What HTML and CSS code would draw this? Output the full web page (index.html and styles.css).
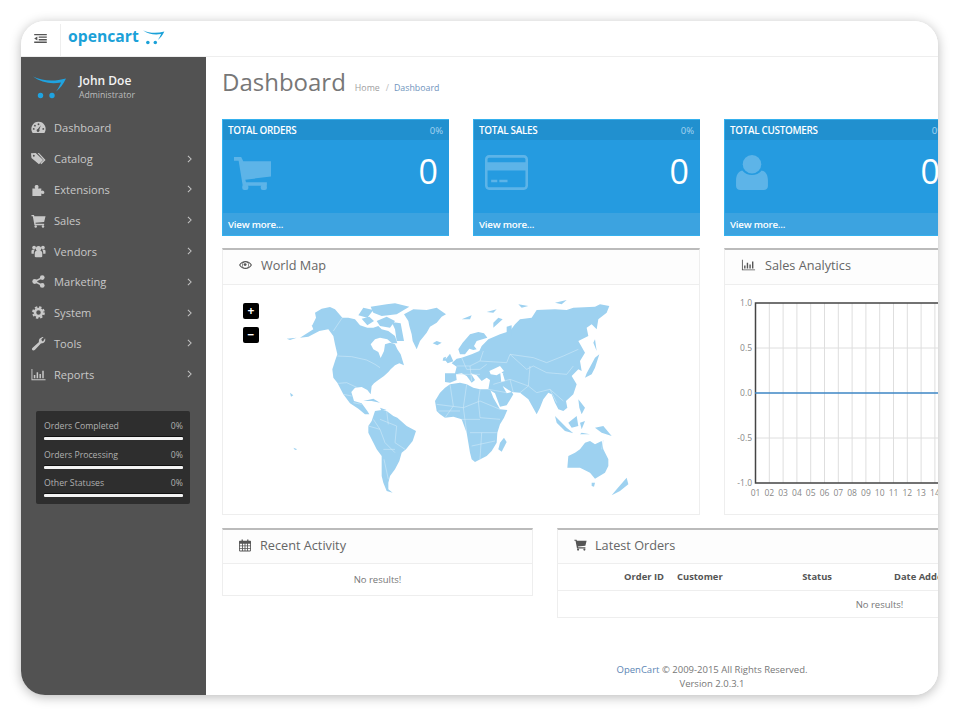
FILE: index.html
```html
<!DOCTYPE html>
<html lang="en">
<head>
<meta charset="utf-8">
<title>OpenCart Dashboard</title>
<link rel="stylesheet" href="styles.css">
</head>
<body>
<svg class="defs" width="0" height="0" aria-hidden="true">
  <symbol id="i-dash" viewBox="0 0 16 16"><path fill-rule="evenodd" d="M8 2a7.5 7.5 0 0 1 6.6 11.2l-.4.6H1.800l-.4-.6A7.500 7.500 0 0 1 8 2zM8 3.500a1 1 0 1 0 0 2 1 1 0 0 0 0-2zM4.200 5a1 1 0 1 0 0 2 1 1 0 0 0 0-2zM2.900 8.500a1 1 0 1 0 0 2 1 1 0 0 0 0-2zM13.100 8.500a1 1 0 1 0 0 2 1 1 0 0 0 0-2zM10.500 5.500 7.300 9.700a1.500 1.500 0 1 0 1.500.6z"/></symbol>
  <symbol id="i-tags" viewBox="0 0 16 16"><path fill-rule="evenodd" d="M0 2.500 5 2l8 7.500L8.500 14 .5 7.500zM3 4a1 1 0 1 0 0 2 1 1 0 0 0 0-2z"/><path d="M7 2h1.500l7 7.500-4.500 4.500-1-1 3.500-3.500z"/></symbol>
  <symbol id="i-puzzle" viewBox="0 0 16 16"><path d="M1.500 7h3C4.200 6.200 3.800 5.500 4 4.500 4.400 2.800 7.600 2.800 8 4.500c.2 1-.2 1.700-.5 2.500H11v2.700c.7-.4 1.300-.7 2-.5 1.700.4 1.700 3.200 0 3.600-.7.200-1.300-.1-2-.5V15H1.500z"/></symbol>
  <symbol id="i-cart" viewBox="0 0 16 16"><path d="M.5 2h2.700l.4 1.500h11.900L14 9.500l-9.200 1 .2 1h9V13H3.700L1.900 3.500H.5z"/><circle cx="5" cy="14.300" r="1.300"/><circle cx="12.800" cy="14.300" r="1.300"/></symbol>
  <symbol id="i-users" viewBox="0 0 16 16"><circle cx="8" cy="5" r="2.800"/><circle cx="3.300" cy="3.800" r="2"/><circle cx="12.700" cy="3.800" r="2"/><path d="M4 9.500c0-1.500 1-2 2-2h4c1 0 2 .5 2 2V13c0 .5-.5 1-1 1H5c-.5 0-1-.5-1-1z"/><path d="M.5 7.500c0-1 .8-1.500 1.500-1.500h1.800c-.3 1-.8 1.500-.8 3v1.500H1.200c-.4 0-.7-.3-.7-.7zM15.500 7.500c0-1-.8-1.500-1.500-1.500h-1.800c.3 1 .8 1.500.8 3v1.500h1.800c.4 0 .7-.3.7-.7z"/></symbol>
  <symbol id="i-share" viewBox="0 0 16 16"><circle cx="4" cy="8" r="2.600"/><circle cx="12" cy="3.800" r="2.500"/><circle cx="12" cy="12.200" r="2.500"/><path d="M4 8 12 3.800M4 8 12 12.200" stroke="currentColor" stroke-width="1.600"/></symbol>
  <symbol id="i-cog" viewBox="0 0 16 16"><circle cx="8" cy="8" r="3.800" fill="none" stroke="currentColor" stroke-width="2.800"/><circle cx="8" cy="8" r="5.800" fill="none" stroke="currentColor" stroke-width="2" stroke-dasharray="2.550 2"/></symbol>
  <symbol id="i-wrench" viewBox="0 0 16 16"><path d="M15 2.500c.8 2.500-.5 5.500-4.500 5.500L4 15c-1 .8-2.500.5-2.800-.3-.4-.8-.2-1.700.5-2.300L8.500 6.500C7.800 3.500 10 1 13.500 1L11 3.500 11.800 5.500 13 5.500z"/></symbol>
  <symbol id="i-bars" viewBox="0 0 16 16"><path d="M.5 2H1.500V13H15.500V14H.5zM3 8.500h1.600V12H3zM6 5.500h1.600V12H6zM9 7.500h1.600V12H9zM12 4h1.600v8H12z"/></symbol>
  <symbol id="i-eye" viewBox="0 0 16 12"><path fill-rule="evenodd" d="M0 6C2 2.500 5 1 8 1s6 1.500 8 5c-2 3.500-5 5-8 5S2 9.500 0 6zM8 2.500a3.500 3.500 0 1 0 0 7 3.500 3.500 0 0 0 0-7zM1.500 6c1 1.400 2.200 2.400 3.500 3A4.500 4.500 0 0 1 5 3C3.700 3.600 2.500 4.600 1.500 6zm9.500-3a4.500 4.500 0 0 1 0 6c1.300-.6 2.500-1.600 3.500-3-1-1.400-2.200-2.400-3.500-3z"/><circle cx="7.500" cy="5.500" r="1.800"/></symbol>
  <symbol id="i-cal" viewBox="0 0 14 16"><path fill-rule="evenodd" d="M1 3h2V1.500h1.500V3h5V1.500H11V3h2c.5 0 1 .5 1 1v10.500c0 .5-.5 1-1 1H1c-.5 0-1-.5-1-1V4c0-.5.5-1 1-1zM1 6.500V8.500h2.500V6.500zM4.500 6.500V8.500h2V6.500zM7.500 6.500V8.500h2V6.500zM10.500 6.500V8.500H13V6.500zM1 9.500v2h2.500v-2zM4.500 9.500v2h2v-2zM7.500 9.500v2h2v-2zM10.500 9.500v2H13v-2zM1 12.500v2h2.500v-2zM4.500 12.500v2h2v-2zM7.500 12.500v2h2v-2zM10.500 12.500v2H13v-2z"/></symbol>
  <symbol id="i-swoosh" viewBox="0 0 34 24"><path d="M0 0C10 5 22 5 33 2 30 8 27 12 23 15 26 11 27 8 28 6 18 8 8 6 0 0z"/><circle cx="7.500" cy="19" r="2.700"/><circle cx="19" cy="19" r="2.700"/></symbol>
</svg>

<div class="screen">
  <header class="topbar">
    <div class="menu-btn">
      <svg class="menu-icon" viewBox="0 0 14 10"><path d="M0 0h14v1.500H0zM5 2.800h9v1.500H5zM5 5.600h9v1.500H5zM0 8.400h14v1.500H0zM3.500 2.800v4.300L0 5z"/></svg>
    </div>
    <div class="brand">
      <span class="brand-name">opencart</span>
      <svg class="brand-cart"><use href="#i-swoosh"/></svg>
    </div>
  </header>

  <div class="layout">
    <aside class="sidebar">
      <div class="profile">
        <svg class="profile-logo"><use href="#i-swoosh"/></svg>
        <div class="profile-text">
          <div class="profile-name">John Doe</div>
          <div class="profile-role">Administrator</div>
        </div>
      </div>
      <nav class="nav">
        <a class="nav-item"><svg class="nav-icon"><use href="#i-dash"/></svg><span class="nav-label">Dashboard</span></a>
        <a class="nav-item"><svg class="nav-icon"><use href="#i-tags"/></svg><span class="nav-label">Catalog</span><svg class="chev" viewBox="0 0 6 10"><path d="M1 1l4 4-4 4"/></svg></a>
        <a class="nav-item"><svg class="nav-icon"><use href="#i-puzzle"/></svg><span class="nav-label">Extensions</span><svg class="chev" viewBox="0 0 6 10"><path d="M1 1l4 4-4 4"/></svg></a>
        <a class="nav-item"><svg class="nav-icon"><use href="#i-cart"/></svg><span class="nav-label">Sales</span><svg class="chev" viewBox="0 0 6 10"><path d="M1 1l4 4-4 4"/></svg></a>
        <a class="nav-item"><svg class="nav-icon"><use href="#i-users"/></svg><span class="nav-label">Vendors</span><svg class="chev" viewBox="0 0 6 10"><path d="M1 1l4 4-4 4"/></svg></a>
        <a class="nav-item"><svg class="nav-icon"><use href="#i-share"/></svg><span class="nav-label">Marketing</span><svg class="chev" viewBox="0 0 6 10"><path d="M1 1l4 4-4 4"/></svg></a>
        <a class="nav-item"><svg class="nav-icon"><use href="#i-cog"/></svg><span class="nav-label">System</span><svg class="chev" viewBox="0 0 6 10"><path d="M1 1l4 4-4 4"/></svg></a>
        <a class="nav-item"><svg class="nav-icon"><use href="#i-wrench"/></svg><span class="nav-label">Tools</span><svg class="chev" viewBox="0 0 6 10"><path d="M1 1l4 4-4 4"/></svg></a>
        <a class="nav-item"><svg class="nav-icon"><use href="#i-bars"/></svg><span class="nav-label">Reports</span><svg class="chev" viewBox="0 0 6 10"><path d="M1 1l4 4-4 4"/></svg></a>
      </nav>
      <div class="stats">
        <div class="stat"><div class="stat-row"><span>Orders Completed</span><span>0%</span></div><div class="stat-bar"></div></div>
        <div class="stat"><div class="stat-row"><span>Orders Processing</span><span>0%</span></div><div class="stat-bar"></div></div>
        <div class="stat"><div class="stat-row"><span>Other Statuses</span><span>0%</span></div><div class="stat-bar"></div></div>
      </div>
    </aside>

    <main class="main">
      <div class="main-inner">
        <div class="page-head">
          <h1 class="page-title">Dashboard</h1>
          <div class="crumbs"><span class="crumb">Home</span><span class="crumb-sep">/</span><span class="crumb crumb-active">Dashboard</span></div>
        </div>

        <div class="tiles">
          <div class="tile">
            <div class="tile-head"><span>TOTAL ORDERS</span><span class="tile-pct">0%</span></div>
            <div class="tile-body">
              <svg class="tile-icon tile-icon-cart" viewBox="0 0 36 32"><path d="M0 0h7l2 4h27v15l-25 3 .7 2.500H32V28H8.500L4.500 3.500H0z"/><rect x="8" y="27" width="6" height="5" rx="2"/><rect x="26" y="27" width="6" height="5" rx="2"/></svg>
              <span class="tile-num">0</span>
            </div>
            <div class="tile-foot">View more...</div>
          </div>
          <div class="tile">
            <div class="tile-head"><span>TOTAL SALES</span><span class="tile-pct">0%</span></div>
            <div class="tile-body">
              <svg class="tile-icon tile-icon-card" viewBox="0 0 42 34"><path fill-rule="evenodd" d="M4 0h34c2.200 0 4 1.800 4 4v26c0 2.200-1.800 4-4 4H4c-2.200 0-4-1.800-4-4V4c0-2.200 1.800-4 4-4zM2.500 4v3h37V4c0-.8-.7-1.500-1.500-1.500H4C3.200 2.500 2.500 3.200 2.500 4zM2.500 15v15c0 .8.700 1.500 1.500 1.500h34c.8 0 1.500-.7 1.500-1.500V15zM6 24h6v2.500H6zM14 24h8v2.500h-8z"/></svg>
              <span class="tile-num">0</span>
            </div>
            <div class="tile-foot">View more...</div>
          </div>
          <div class="tile">
            <div class="tile-head"><span>TOTAL CUSTOMERS</span><span class="tile-pct">0%</span></div>
            <div class="tile-body">
              <svg class="tile-icon tile-icon-user" viewBox="0 0 31 34"><circle cx="15.500" cy="9" r="9"/><path d="M6 15c2.500 3 6 4.500 9.500 4.500S22.500 18 25 15c4 1 6 4.500 6 10v5c0 2.500-2 4-4 4H4c-2 0-4-1.500-4-4v-5c0-5.500 2-9 6-10z"/></svg>
              <span class="tile-num">0</span>
            </div>
            <div class="tile-foot">View more...</div>
          </div>
        </div>

        <div class="row-charts">
          <section class="panel">
            <h2 class="panel-head"><svg class="head-icon head-eye"><use href="#i-eye"/></svg>World Map</h2>
            <div class="map-body">
              <div class="zoom-btns"><span class="zoom-btn">+</span><span class="zoom-btn">&minus;</span></div>
              <svg class="world" viewBox="0 0 1080 660">
                <g class="land">
                  <path d="M97 118 108 95 105 80 125 68 150 63 165 70 187 95 205 95 225 100 240 118 262 125 280 125 295 120 305 130 325 135 345 150 352 172 336 172 322 160 300 155 285 160 272 175 280 190 295 198 302 216 312 195 315 175 330 170 345 175 352 190 362 205 372 238 358 232 345 238 332 250 325 258 312 270 295 282 282 292 275 300 272 325 262 312 245 303 225 305 214 318 222 345 245 352 262 375 268 385 255 385 235 368 210 352 190 325 172 290 160 275 157 250 165 225 172 205 165 175 160 150 145 130 118 135 85 152 60 155 100 130 95 118z"/>
                  <path d="M235 88 250 65 280 72 262 95zM245 98 268 92 282 105 262 118zM272 62 320 55 345 52 388 62 350 85 305 90 280 80zM290 105 320 92 345 105 330 125 300 120zM335 108 362 112 372 165 350 165 345 130z"/>
                  <path d="M372 85 400 70 440 72 470 65 498 85 485 92 470 110 450 122 440 140 420 165 410 190 398 165 395 145 388 120 385 105z"/>
                  <path d="M458 172 470 165 485 170 472 178z"/>
                  <path d="M250 345 280 338 300 350 275 345zM300 365 320 372 305 375z"/>
                  <path d="M285 375 305 372 320 375 340 390 352 395 380 420 408 435 398 465 378 490 365 500 358 525 345 550 330 570 325 590 325 610 338 620 320 615 310 590 305 570 305 510 290 490 265 440 265 420 275 405z"/>
                  <path d="M480 320 495 305 510 295 540 290 560 295 580 305 600 310 630 310 640 335 660 370 682 372 672 395 660 415 652 440 650 470 635 495 620 510 585 528 575 520 570 500 565 470 560 440 545 400 520 392 495 395 480 385 470 375 465 345z"/>
                  <path d="M672 455 680 468 665 497 655 490 660 470z"/>
                  <path d="M495 262 495 288 510 290 530 282 528 265 545 262 560 270 575 290 585 282 572 262 590 268 605 285 620 275 630 282 625 310 645 322 660 362 680 358 700 325 695 318 720 320 745 340 770 385 780 365 790 340 805 320 815 325 825 350 835 370 850 375 862 365 858 345 880 325 890 295 875 270 895 250 905 255 900 225 915 200 895 165 925 150 920 125 935 115 950 130 955 100 980 80 988 60 960 55 945 62 880 65 860 72 825 70 770 72 755 95 720 100 705 115 690 135 660 145 625 160 605 180 598 195 575 205 545 215 530 218 515 232 530 242 525 262z"/>
                  <path d="M535 190 548 170 570 145 595 138 612 142 622 155 590 165 582 180 590 190 580 192 568 188 555 205 540 205z"/>
                  <path d="M495 222 510 203 520 226 503 232zM490 215 498 212 496 224 488 224z"/>
                  <path d="M545 100 575 88 570 100zM620 78 650 70 640 80zM715 55 745 60 725 65zM825 50 860 42 845 55zM655 95 668 100 640 125 640 110zM680 122 695 118 695 150 680 148z"/>
                  <path d="M945 215 958 205 945 245 935 265 915 275 920 262zM945 160 950 195 940 170z"/>
                  <path d="M895 340 915 365 905 385 898 365zM825 390 860 425 880 442 855 435 830 410z"/>
                  <path d="M865 410 890 390 895 420 875 425zM900 410 915 405 905 430zM945 425 970 420 995 450 965 440zM905 440 930 445 900 445z"/>
                  <path d="M862 545 865 510 885 500 900 490 915 470 930 465 945 475 965 465 970 490 985 520 985 540 975 560 945 578 930 560 900 545z"/>
                  <path d="M1040 575 1045 595 1020 615 995 628 1010 610zM935 590 945 590 942 602 935 600z"/>
                  <path d="M30 320 40 328 33 332zM40 485 52 490 45 492zM20 158 50 155 30 162z"/>
                </g>
                <g class="seas">
                  <path d="M628 255 660 240 672 255 650 268 632 265z"/>
                  <path d="M660 255 668 262 675 285 664 288z"/>
                  <path d="M668 300 695 318 680 322z"/>
                </g>
                <g class="borders">
                  <path d="M187 95 160 135M172 210 215 212 260 222 285 235 300 245M175 292 200 290 232 305"/>
                  <path d="M190 325 215 330M220 350 245 355"/>
                  <path d="M265 420 300 430 315 470 345 500M300 400 350 420 345 470 375 490M300 430 280 400M320 375 325 415M310 490 345 490M312 520 325 580"/>
                  <path d="M470 355 550 365 600 345 660 370M510 295 520 360 495 395M560 295 550 365 560 440M600 310 595 345 600 395 660 400M545 400 600 400M570 440 650 440M575 480 645 465M605 440 600 520M475 375 540 375"/>
                  <path d="M530 240 570 240 600 225 610 195M545 215 560 250 600 250 620 235M530 265 600 265M570 240 575 285M600 225 680 230 690 205 760 215 800 230 850 210 895 190M690 205 740 250 760 240 800 260 860 265 880 240M750 240 745 300 770 320 810 310 850 345M640 295 690 280 745 300M690 280 700 320M720 320 745 300M625 310 680 320M810 310 830 350"/>
                  <path d="M970 462 965 490"/>
                </g>
              </svg>
            </div>
          </section>

          <section class="panel">
            <h2 class="panel-head"><svg class="head-icon head-bars"><use href="#i-bars"/></svg>Sales Analytics</h2>
            <div class="chart-body">
              <svg class="chart" width="476" height="229" viewBox="0 0 476 229">
                <g class="grid-lines">
                  <path d="M44.300 18V198M58.100 18V198M71.900 18V198M85.700 18V198M99.500 18V198M113.300 18V198M127.100 18V198M140.900 18V198M154.700 18V198M168.500 18V198M182.300 18V198M196.100 18V198M209.900 18V198M223.700 18V198"/>
                  <path d="M30 63H476M30 153H476"/>
                </g>
                <path class="axis" d="M476 18H30.500V198H476"/>
                <path class="series" d="M30 108H476"/>
                <g class="y-labels">
                  <text x="27" y="21">1.0</text>
                  <text x="27" y="66">0.5</text>
                  <text x="27" y="111">0.0</text>
                  <text x="27" y="156">-0.5</text>
                  <text x="27" y="201">-1.0</text>
                </g>
                <g class="x-labels">
                  <text x="30.500" y="211">01</text><text x="44.300" y="211">02</text><text x="58.100" y="211">03</text><text x="71.900" y="211">04</text><text x="85.700" y="211">05</text><text x="99.500" y="211">06</text><text x="113.300" y="211">07</text><text x="127.100" y="211">08</text><text x="140.900" y="211">09</text><text x="154.700" y="211">10</text><text x="168.500" y="211">11</text><text x="182.300" y="211">12</text><text x="196.100" y="211">13</text><text x="209.900" y="211">14</text>
                </g>
              </svg>
            </div>
          </section>
        </div>

        <div class="row-lists">
          <section class="panel">
            <h2 class="panel-head panel-head-sm"><svg class="head-icon head-cal"><use href="#i-cal"/></svg>Recent Activity</h2>
            <div class="no-results">No results!</div>
          </section>
          <section class="panel">
            <h2 class="panel-head panel-head-sm"><svg class="head-icon head-cart"><use href="#i-cart"/></svg>Latest Orders</h2>
            <div class="order-cols">
              <span class="col-id">Order ID</span>
              <span>Customer</span>
              <span class="col-status">Status</span>
              <span class="col-date">Date Added</span>
            </div>
            <div class="no-results no-results-orders">No results!</div>
          </section>
        </div>

        <footer class="footer">
          <div><span class="footer-link">OpenCart</span> &copy; 2009-2015 All Rights Reserved.</div>
          <div>Version 2.0.3.1</div>
        </footer>
      </div>
    </main>
  </div>
</div>
</body>
</html>
```
FILE: styles.css
```css
* { box-sizing: border-box; }
html, body { margin: 0; padding: 0; background: #fff; height: 100%; overflow: hidden; }
body { font-family: "Open Sans", "Liberation Sans", sans-serif; font-size: 12px; color: #666; }
.defs { position: absolute; }

.screen {
  margin: 21px 0 0 21px;
  width: 917px;
  height: 674px;
  border-radius: 24px;
  overflow: hidden;
  background: #fff;
  box-shadow: 0 2px 12px rgba(0, 0, 0, .28);
  display: flex;
  flex-direction: column;
}

/* top bar */
.topbar { height: 36px; flex: none; display: flex; background: #fff; border-bottom: 1px solid #eee; }
.menu-btn { width: 40px; display: flex; align-items: center; justify-content: center; border-right: 1px solid #eee; margin-top: 3px; padding-bottom: 4px; }
.menu-icon { width: 13px; height: 9px; fill: #555; }
.brand { display: flex; align-items: flex-start; padding-left: 7px; }
.brand-name { font-size: 15.700px; line-height: 30px; font-weight: 700; color: #1ba1d8; }
.brand-cart { width: 22px; height: 16px; margin: 9px 0 0 4px; fill: #1ba1d8; }

.layout { flex: 1; display: flex; min-height: 0; }

/* sidebar */
.sidebar { width: 185px; flex: none; background: #525252; color: #ccc; }
.profile { display: flex; height: 55.500px; padding: 19px 0 0 12px; }
.profile-logo { width: 34px; height: 25px; fill: #1fa3e0; flex: none; }
.profile-text { margin-left: 12px; margin-top: -3px; }
.profile-name { font-size: 12px; line-height: 16px; font-weight: 600; color: #f2f2f2; }
.profile-role { font-size: 8.700px; line-height: 12px; color: #bdbdbd; }

.nav { display: flex; flex-direction: column; }
.nav-item { height: 30.800px; display: flex; align-items: center; padding: 0 14px 0 10px; }
.nav-icon { width: 15px; height: 15px; fill: #c9c9c9; color: #c9c9c9; flex: none; }
.nav-label { margin-left: 8px; font-size: 11.100px; color: #c8c8c8; flex: 1; }
.chev { width: 5px; height: 8px; fill: none; stroke: #c4c4c4; stroke-width: 1.300; flex: none; }

.stats { margin: 21.500px 16px 0 15px; height: 93px; padding: 7px 7px 0 8px; background: #2e2e2e; border-radius: 2px; }
.stat { height: 28.500px; }
.stat-row { display: flex; justify-content: space-between; font-size: 8.700px; line-height: 16px; color: #b0b0b0; }
.stat-bar { height: 3px; margin-top: 3px; background: #f4f4f4; border-radius: 1px; box-shadow: 0 -1px 0 #111; }

/* main */
.main { flex: 1; min-width: 0; overflow: hidden; background: #fff; }
.main-inner { width: 1012px; height: 100%; padding: 0 16px; display: flex; flex-direction: column; }

.page-head { height: 62px; display: flex; align-items: flex-start; }
.page-title { margin: 7px 0 0; font-size: 24px; line-height: 36px; font-weight: 400; color: #777; }
.crumbs { margin: 24px 0 0 9px; font-size: 8.800px; line-height: 14px; display: flex; }
.crumb { color: #a0a0a0; }
.crumb-sep { margin: 0 5px 0 6px; color: #bbb; }
.crumb-active { color: #6f94bd; }

.tiles { display: grid; grid-template-columns: repeat(4, 227px); column-gap: 24px; }
.tile { height: 117px; display: flex; flex-direction: column; background: #259be0; border: 1px solid #35b1ee; border-width: 1px 0 1px 1px; color: #fff; }
.tile-head { height: 20px; display: flex; justify-content: space-between; align-items: center; padding: 0 6px 0 5px; background: #2190cf; font-size: 9.900px; font-weight: 600; letter-spacing: -.3px; }
.tile-pct { font-weight: 400; color: #a6d4ef; font-size: 9.500px; letter-spacing: 0; }
.tile-body { flex: 1; display: flex; justify-content: space-between; align-items: center; padding: 0 11px 0 11px; }
.tile-icon { fill: #5db4e8; flex: none; margin-bottom: 8px; }
.tile-icon-cart { width: 37px; height: 33px; margin-bottom: 6px; }
.tile-icon-card { width: 43px; height: 35px; }
.tile-icon-user { width: 32px; height: 35px; }
.tile-num { font-size: 34px; line-height: 40px; margin-bottom: 12px; }
.tile-foot { height: 22px; display: flex; align-items: center; padding-left: 5px; background: #3ca3e0; font-size: 9.700px; font-weight: 600; letter-spacing: -.2px; }

.panel { background: #fff; border: 1px solid #eee; border-top: 2px solid #bbb; }
.panel-head { height: 35px; margin: 0; padding: 0 0 4px 16px; display: flex; align-items: center; font-size: 12.700px; font-weight: 400; color: #666; background: #fdfdfd; border-bottom: 1px solid #eee; }
.panel-head-sm { height: 34px; }
.head-icon { fill: #555; flex: none; }
.head-eye { width: 13px; height: 10px; margin-right: 9px; }
.head-bars { width: 15px; height: 14px; margin-right: 9px; }
.head-cal { width: 12px; height: 14px; margin-right: 9px; }
.head-cart { width: 13px; height: 13px; margin-right: 8px; }

.row-charts { margin-top: 12px; display: grid; grid-template-columns: 478px 478px; column-gap: 24px; height: 266px; }
.map-body { position: relative; height: 229px; padding: 1px 0 0 57px; }
.zoom-btns { position: absolute; left: 20px; top: 18px; display: flex; flex-direction: column; gap: 8px; }
.zoom-btn { width: 16px; height: 16px; border-radius: 2px; background: #000; color: #fff; font-size: 12px; font-weight: 700; line-height: 15px; text-align: center; }
.world { display: block; width: 360px; height: 220px; }
.land path { fill: #9dd1f0; }
.seas path { fill: #fff; }
.borders path { fill: none; stroke: #d5ecf9; stroke-width: 1.600; }

.chart-body { height: 229px; overflow: hidden; }
.chart { display: block; }
.grid-lines path { fill: none; stroke: #dedede; stroke-width: 1; }
.axis { fill: none; stroke: #444; stroke-width: 1.500; }
.series { fill: none; stroke: #3d86c4; stroke-width: 1.500; }
.chart text { font-family: "Open Sans", sans-serif; font-size: 8.500px; fill: #888; }
.y-labels text { text-anchor: end; }
.x-labels text { text-anchor: middle; }

.row-lists { margin-top: 14px; display: grid; grid-template-columns: 311px 645px; column-gap: 24px; align-items: start; }
.no-results { height: 31px; display: flex; align-items: center; justify-content: center; font-size: 9.500px; color: #777; }
.no-results-orders { height: 26px; }
.order-cols { height: 27px; padding-bottom: 1px; display: grid; grid-template-columns: 106px 112px 30px 1fr; column-gap: 13px; align-items: center; font-size: 9.400px; font-weight: 700; color: #555; border-bottom: 1px solid #eee; }
.col-id { text-align: right; }
.col-status { white-space: nowrap; justify-self: end; }
.col-date { margin-left: 49px; white-space: nowrap; }

.footer { margin-top: 45px; text-align: center; font-size: 9.500px; line-height: 14px; color: #777; }
.footer-link { color: #5c86b5; }
```
